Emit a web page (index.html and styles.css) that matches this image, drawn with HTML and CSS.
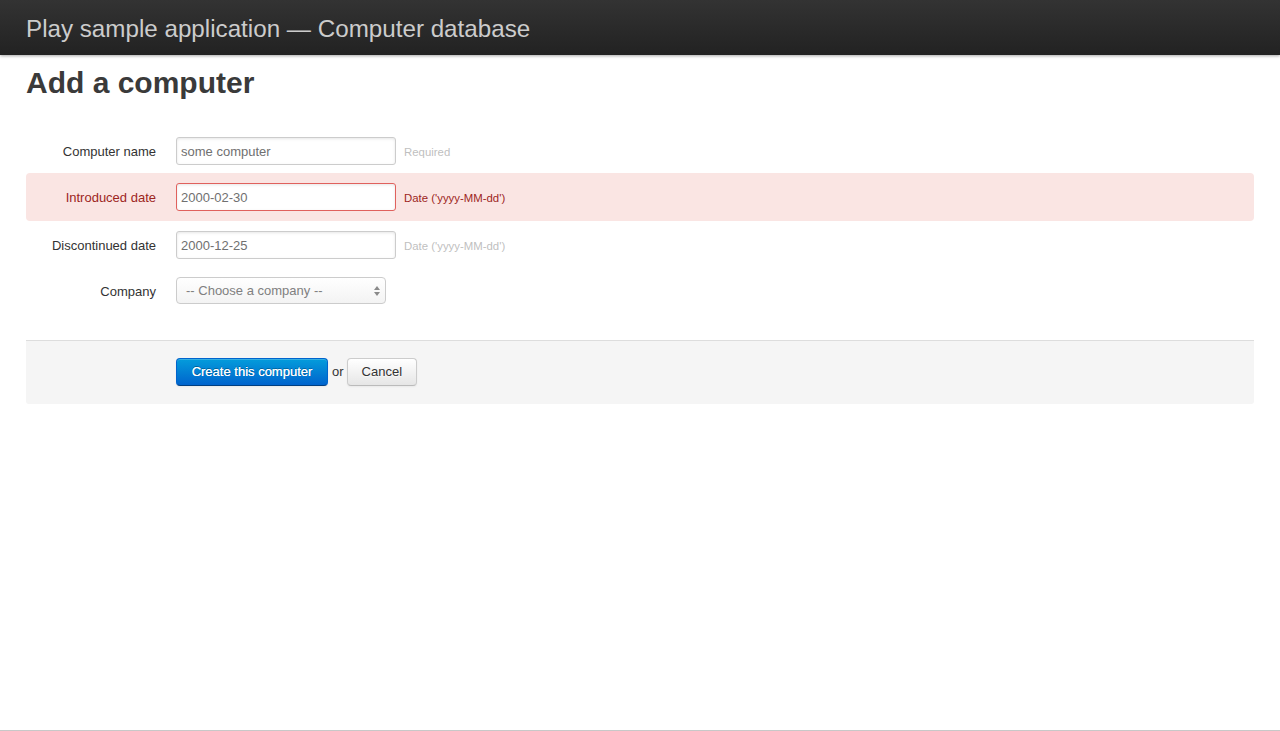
FILE: index.html
```html
<!DOCTYPE html>
<html>
<head>
<meta charset="utf-8">
<title>Computers database</title>
<link rel="stylesheet" href="styles.css">
</head>
<body>
<div class="page">
  <header class="topbar">
    <h1 class="app-title">Play sample application — Computer database</h1>
  </header>
  <section class="main">
    <h1 class="page-title">Add a computer</h1>
    <form class="form">
      <fieldset class="fields">
        <div class="row">
          <label class="row-label">Computer name</label>
          <div class="input">
            <input class="text" type="text" value="some computer">
            <span class="help">Required</span>
          </div>
        </div>
        <div class="row error">
          <label class="row-label">Introduced date</label>
          <div class="input">
            <input class="text" type="text" value="2000-02-30">
            <span class="help">Date ('yyyy-MM-dd')</span>
          </div>
        </div>
        <div class="row">
          <label class="row-label">Discontinued date</label>
          <div class="input">
            <input class="text" type="text" value="2000-12-25">
            <span class="help">Date ('yyyy-MM-dd')</span>
          </div>
        </div>
        <div class="row">
          <label class="row-label">Company</label>
          <div class="input">
            <div class="select">
              <span class="select-text">-- Choose a company --</span>
              <svg class="select-arrows" width="6" height="10" viewBox="0 0 6 10"><path d="M0 4 L3 0 L6 4 Z M0 6 L3 10 L6 6 Z" fill="#8a8a8a"/></svg>
            </div>
          </div>
        </div>
      </fieldset>
      <div class="actions">
        <button type="button" class="btn primary">Create this computer</button>
        <span class="or">or</span>
        <button type="button" class="btn">Cancel</button>
      </div>
    </form>
  </section>
  <div class="spacer"></div>
  <div class="bottom-line"></div>
</div>
</body>
</html>
```
FILE: styles.css
```css
* { box-sizing: border-box; }
html, body { margin: 0; padding: 0; }
body {
  font-family: "Liberation Sans", Arial, Helvetica, sans-serif;
  font-size: 13px;
  line-height: 18px;
  color: #333333;
  background: #fff;
}
.page {
  display: flex;
  flex-direction: column;
  min-height: 731px;
  height: 100vh;
}
.topbar {
  height: 55px;
  flex: none;
  background: linear-gradient(to bottom, #333333, #222222);
  box-shadow: 0 1px 3px rgba(0,0,0,0.35);
  padding: 0 26px;
  display: flex;
  align-items: center;
  position: relative;
  z-index: 1;
}
.app-title {
  margin: 0;
  font-size: 24.2px;
  font-weight: normal;
  color: #cccccc;
  line-height: 28px;
  padding-top: 2px;
  white-space: nowrap;
}
.main {
  padding: 0 26px;
}
.page-title {
  margin: 10px 0 0;
  font-size: 30px;
  line-height: 36px;
  font-weight: bold;
  color: #3a3a3a;
}
.form { margin: 0; }
.fields {
  margin: 0;
  border: 0;
  padding: 36px 0 0;
  min-width: 0;
}
.row {
  display: flex;
  align-items: flex-start;
  margin-bottom: 18px;
}
.row.error {
  background: #fae5e3;
  border-radius: 4px;
  padding: 10px 0;
  margin: -10px 0 10px;
}
.row-label {
  width: 130px;
  padding-top: 6px;
  text-align: right;
  line-height: 18px;
  color: #333333;
  flex: none;
}
.row.error .row-label { color: #9d261d; }
.input {
  margin-left: 20px;
  display: flex;
  align-items: center;
}
.text {
  width: 220px;
  height: 28px;
  padding: 4px;
  font-family: inherit;
  font-size: 13px;
  line-height: 18px;
  color: #707070;
  border: 1px solid #cccccc;
  border-radius: 3px;
  box-shadow: inset 0 1px 3px rgba(0,0,0,0.1);
  background: #fff;
  outline: none;
  margin: 0;
}
.row.error .text {
  border-color: #e0615d;
}
.help {
  padding-left: 8px;
  font-size: 11.4px;
  color: #bfbfbf;
  line-height: 18px;
  padding-top: 2px;
}
.row.error .help { color: #9d261d; }
.select {
  width: 210px;
  height: 27px;
  border: 1px solid #cccccc;
  border-radius: 4px;
  background: linear-gradient(to bottom, #ffffff, #f3f3f3);
  display: flex;
  align-items: center;
  justify-content: space-between;
  padding: 0 5px 0 9px;
  color: #808080;
  font-size: 13px;
}
.select-arrows { flex: none; }
.actions {
  margin-top: 18px;
  border-top: 1px solid #dddddd;
  background: #f5f5f5;
  border-radius: 0 0 3px 3px;
  padding: 17px 20px 18px 150px;
  display: flex;
  align-items: center;
}
.btn {
  height: 28px;
  padding: 0 14px;
  font-family: inherit;
  font-size: 13px;
  line-height: 18px;
  color: #333333;
  background: linear-gradient(to bottom, #ffffff, #e6e6e6);
  border: 1px solid #cccccc;
  border-bottom-color: #bbbbbb;
  border-radius: 4px;
  box-shadow: inset 0 1px 0 rgba(255,255,255,0.2), 0 1px 2px rgba(0,0,0,0.05);
  text-shadow: 0 1px 1px rgba(255,255,255,0.75);
  margin: 0;
  cursor: pointer;
}
.btn.primary {
  color: #ffffff;
  background: linear-gradient(to bottom, #049cdb, #0064cd);
  border-color: #0064cd #0064cd #003f81;
  text-shadow: 0 -1px 0 rgba(0,0,0,0.3), 0 0 0.4px #ffffff;
  width: 152px;
  padding: 0;
}
.or {
  margin: 0 3px 0 4px;
  color: #333333;
}
.spacer { flex: 1; }
.bottom-line {
  height: 1px;
  background: #c8c8c8;
  flex: none;
}
```
